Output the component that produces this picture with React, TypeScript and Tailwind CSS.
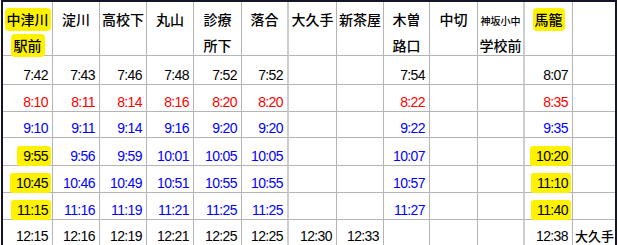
import React from "react";

type Cell = { t: string; hl?: boolean };

const headers: { l1: string; l2?: string; hl?: boolean; small?: boolean }[] = [
  { l1: "中津川", l2: "駅前", hl: true },
  { l1: "淀川" },
  { l1: "高校下" },
  { l1: "丸山" },
  { l1: "診療", l2: "所下" },
  { l1: "落合" },
  { l1: "大久手" },
  { l1: "新茶屋" },
  { l1: "木曽", l2: "路口" },
  { l1: "中切" },
  { l1: "神坂小中", l2: "学校前", small: true },
  { l1: "馬籠", hl: true },
  { l1: "" },
];

const r = (s: string): Cell[] =>
  s.split(",").map((x) => (x.endsWith("*") ? { t: x.slice(0, -1), hl: true } : { t: x }));

const rows: { cells: Cell[]; color: string }[] = [
  { cells: r("7:42,7:43,7:46,7:48,7:52,7:52,,,7:54,,,8:07,"), color: "text-[#000000]" },
  { cells: r("8:10,8:11,8:14,8:16,8:20,8:20,,,8:22,,,8:35,"), color: "text-[#ff0000]" },
  { cells: r("9:10,9:11,9:14,9:16,9:20,9:20,,,9:22,,,9:35,"), color: "text-[#0000ff]" },
  { cells: r("9:55*,9:56,9:59,10:01,10:05,10:05,,,10:07,,,10:20*,"), color: "text-[#0000ff]" },
  { cells: r("10:45*,10:46,10:49,10:51,10:55,10:55,,,10:57,,,11:10*,"), color: "text-[#0000ff]" },
  { cells: r("11:15*,11:16,11:19,11:21,11:25,11:25,,,11:27,,,11:40*,"), color: "text-[#0000ff]" },
  { cells: r("12:15,12:16,12:19,12:21,12:25,12:25,12:30,12:33,,,,12:38,大久手"), color: "text-[#000000]" },
];

function cellBorder(ci: number, ri: number) {
  const right =
    ci === 12
      ? "border-r-0"
      : ci === 5 || ci === 10
      ? "border-r-2 border-r-[#cdcdcd]"
      : "border-r border-r-[#b4b4b4]";
  const bottom = ri === 6 ? "border-b-2 border-b-[#cdcdcd]" : "border-b border-b-[#b4b4b4]";
  return `${right} ${bottom}`;
}

export default function App() {
  return (
    <div className="w-[618px] h-[245px] overflow-hidden bg-white font-['Liberation_Sans','Noto_Sans_CJK_JP',sans-serif]">
      <div className="ml-[1px] w-[616px] border-l-2 border-t-2 border-r-2 border-[#14142a]">
        <div className="grid grid-cols-[50px_47px_47px_47px_48px_47px_48px_47px_46px_48px_47px_48px_42px] grid-rows-[54px_29px_27px_26px_28px_27px_27px_27px]">
          {headers.map((h, ci) => (
            <div
              key={"h" + ci}
              className={`flex flex-col items-center pt-[4px] text-[14px] text-black font-['Noto_Sans_CJK_JP',sans-serif] font-medium ${cellBorder(ci, -1)}`}
            >
              <div className="h-[26px] leading-[26px] whitespace-nowrap">
                {h.hl ? (
                  <span className="inline-block leading-[23px] px-[2px] rounded-[4px] bg-[#fff200]">{h.l1}</span>
                ) : h.small ? (
                  <span className="text-[10px]">{h.l1}</span>
                ) : (
                  h.l1
                )}
              </div>
              {h.l2 && (
                <div className="h-[26px] leading-[26px] whitespace-nowrap">
                  {h.hl ? (
                    <span className="inline-block leading-[23px] px-[3px] rounded-[4px] bg-[#fff200]">{h.l2}</span>
                  ) : (
                    h.l2
                  )}
                </div>
              )}
            </div>
          ))}
          {rows.map((row, ri) =>
            row.cells.map((c, ci) => {
              const isJp = ci === 12 && c.t !== "";
              return (
                <div
                  key={ri + "-" + ci}
                  className={`flex items-end ${isJp ? "justify-start pl-[2px]" : "justify-end pr-[4px]"} pb-[2px] text-[14px] tracking-[-0.6px] ${row.color} ${cellBorder(ci, ri)}`}
                >
                  {c.t === "" ? null : c.hl ? (
                    <span className="block leading-[14px] bg-[#fff200] text-black rounded-[3px] pt-[3px] pb-[3px] -mb-[3px] pl-[6px] pr-[3px] -mr-[3px]">
                      {c.t}
                    </span>
                  ) : isJp ? (
                    <span className="block leading-[14px] tracking-normal text-[13px] font-['Noto_Sans_CJK_JP',sans-serif] font-medium">
                      {c.t}
                    </span>
                  ) : (
                    <span className="block leading-[14px]">{c.t}</span>
                  )}
                </div>
              );
            })
          )}
        </div>
      </div>
    </div>
  );
}
